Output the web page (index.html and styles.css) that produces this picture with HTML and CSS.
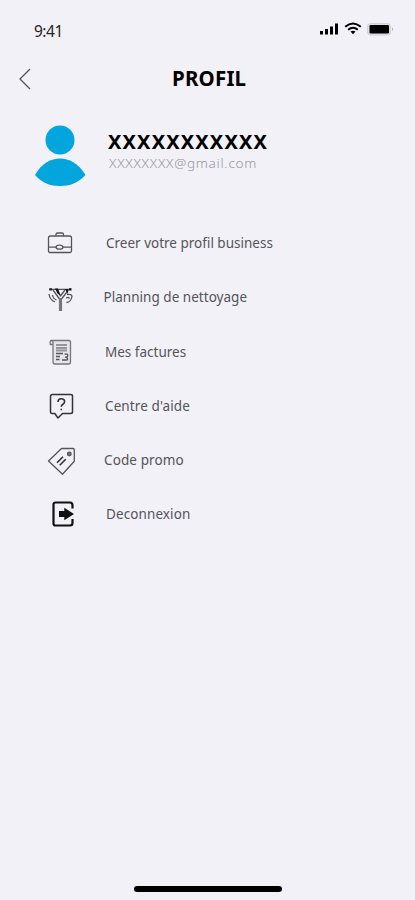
FILE: index.html
```html
<!DOCTYPE html>
<html lang="fr">
<head>
<meta charset="utf-8">
<title>Profil</title>
<link rel="stylesheet" href="styles.css">
</head>
<body>
<div class="screen">
  <header class="status">
    <span class="time">9:41</span>
    <svg class="signals" width="76" height="14" viewBox="0 0 76 14">
      <path d="M1 9h3v3.500H1zM6 7h3v5.500H6zM11 4.500h3v8h-3zM16 1.500h3v11h-3z"/>
      <g fill="none" stroke="#000" stroke-width="2"><path d="M26.200 4.700Q34 -1.800 41.800 4.700"/><path d="M29.200 7.700Q34 3.700 38.800 7.700"/></g>
      <path d="M31.500 9.500Q34 7.800 36.500 9.500L34 12.200z"/>
      <rect x="48.500" y="1.500" width="23" height="11.500" rx="3" fill="#e0dfe3" stroke="#d2d1d6"/>
      <rect x="50.500" y="3" width="19.500" height="8.500" rx="1.200"/>
      <path d="M73 5.500q2 1.700 0 3.500z" fill="#aaa9ad"/>
    </svg>
  </header>
  <nav class="titlebar">
    <svg class="back" width="14" height="24" viewBox="0 0 14 24"><path d="M12 2 2 12l10 10"/></svg>
    <h1>PROFIL</h1>
  </nav>
  <section class="account">
    <svg class="avatar" width="52" height="64" viewBox="0 0 52 64"><circle cx="26" cy="15" r="14.500"/><path d="M1 50C8 38 17 33.500 26 33.500S44 38 51.500 50C44 58 36 61 26 61S8 58 1 50z"/></svg>
    <div class="identity">
      <div class="name">XXXXXXXXXXX</div>
      <div class="mail">XXXXXXXX@gmail.com</div>
    </div>
  </section>
  <ul class="menu">
    <li class="business">
      <svg viewBox="0 0 32 32"><path d="M6.500 9h19q2 0 2 2v13q0 1.500-1.500 1.500H6q-1.500 0-1.500-1.500V11q0-2 2-2zM12 9V7.500Q12 6 13.500 6h4.500q1.500 0 1.500 1.500V9M4.500 20.200H12m7 0h8.500"/><ellipse cx="15.500" cy="20.200" rx="3.400" ry="2"/></svg>
      <span>Creer votre profil business</span>
    </li>
    <li class="planning">
      <svg viewBox="0 0 32 32"><path d="M6 8.300h21M9 9l6.500 9M24.500 9l-7 9M13 9l3.500 6L21 9"/><path d="M5 13q.8 6 6 8M8.500 14q.4 3.500 4 5M23 13.500q4.800-.8 5 2-1 5.500-5.500 6M22 17q3.500-1.500 3 .8"/><path class="trunk" d="M16.500 17v13"/><path class="solid" d="M5.300 7.300h2.500v2.200H5.300zM11 7.500h3l2.500 7-3-2zM25 7.300h2.500v2.200H25zM21 8h3v5z"/></svg>
      <span>Planning de nettoyage</span>
    </li>
    <li class="invoices">
      <svg viewBox="0 0 32 32"><path class="paper" d="M7.500 4.500H25q1.500 0 1.500 1.500v20q0 2-2 2H11q-2 0-2-2V8.500H6.300Q5.500 4.500 7.500 4.500q2 0 1.500 4"/><path class="lines" d="M12 9h11M12 12h11M12 14.500h11"/><path d="M12 17.500h7M12 20.500h4M12 23.500h3.500M18 24h5.500M20.500 18.200h3q1 3-2 3 2.500 0 2 2.800"/></svg>
      <span>Mes factures</span>
    </li>
    <li class="help">
      <svg viewBox="0 0 32 32"><path class="bubble" d="M8.500 4.500h18q2 0 2 1.500V22q0 1.500-2 1.500h-8L14 28l-3.200-4.500H8Q6.500 23.500 6.500 22V6.500Q6.500 4.500 8.500 4.500z"/><path class="bold" d="M14 12q0-3.200 3.300-3.200t3.300 2.700q0 1.700-2 3-1.300.8-1.300 2.200m0 2v1.600"/></svg>
      <span>Centre d'aide</span>
    </li>
    <li class="promo">
      <svg viewBox="0 0 32 32"><path d="M4.500 17 17.500 4.500H29q1.300 0 1.300 1.300v11.500L18.500 30.200z"/><path class="bold" d="m13 18.800 6-6m-3.300 8.500 6-6"/><circle cx="25.300" cy="10" r="1.800" fill="#777"/></svg>
      <span>Code promo</span>
    </li>
    <li class="logout">
      <svg viewBox="0 0 32 32"><path class="door" d="M28.500 10.500V7.500Q28.500 4.500 26 4.500H11.500Q9.500 4.500 9.500 6.500v19q0 2 2 2H26q2.500 0 2.500-2.500V21"/><path class="solid" d="M15 13h5.300V9.800L30 16l-9.700 6.200V19H15z"/></svg>
      <span>Deconnexion</span>
    </li>
  </ul>
  <div class="home"></div>
</div>
</body>
</html>
```
FILE: styles.css
```css
* { box-sizing: border-box; }
body { margin: 0; background: #f2f1f7; color: #000; font-family: "Noto Sans", "Open Sans", sans-serif; }
.screen { height: 900px; display: flex; flex-direction: column; overflow: hidden; }
svg { flex: none; display: block; }
.status { height: 56px; padding: 22px 20px 0 34px; display: flex; justify-content: space-between; align-items: flex-start; }
.time { margin-top: -1px; font-size: 15.5px; line-height: 20px; letter-spacing: -.5px; color: #222; }
.titlebar { height: 46px; padding-left: 18px; display: flex; align-items: center; }
.back { fill: none; stroke: #555; stroke-width: 1.3; }
h1 { margin: -2px 0 0 140px; font-size: 20.5px; line-height: 26px; font-weight: 700; letter-spacing: .2px; }
.account { height: 114px; padding: 23px 0 0 34px; display: flex; align-items: flex-start; }
.avatar { fill: #02a5dc; }
.identity { margin: 4px 0 0 22px; white-space: nowrap; }
.name { font-size: 20px; line-height: 25px; font-weight: 700; letter-spacing: 1.15px; }
.mail { font-size: 13.5px; line-height: 18px; font-weight: 300; letter-spacing: .75px; color: #98979d; margin-left: 1px; }
.menu { list-style: none; margin: -.7px 0 0; padding: 0 0 0 44px; }
.menu li { height: 54.3px; display: flex; align-items: center; white-space: nowrap; }
.menu svg { width: 32px; height: 32px; margin-top: 1px; fill: none; stroke: #55545a; stroke-width: 1.3; stroke-linejoin: round; }
.menu span { margin-left: 30px; font-size: 13.5px; line-height: 20px; margin-top: 1px; font-weight: 400; color: #55545a; }
.menu .planning span { margin-left: 27.5px; letter-spacing: .03px; }
.menu .invoices span, .menu .help span { margin-left: 29px; }
.menu .help span, .menu .promo span, .menu .logout span { letter-spacing: .1px; }
.menu .promo span { margin-left: 28px; }
.menu .solid { fill: #111; stroke: none; }
.menu .trunk { stroke: #77767b; stroke-width: 3.2; }
.menu .lines { stroke: #96959a; stroke-width: 1.8; }
.menu .paper { stroke: #77767b; fill: #e6e5ea; }
.menu .bubble { stroke: #333; stroke-width: 1.5; }
.menu .bold { stroke: #333; stroke-width: 1.6; }
.menu .door { stroke: #111; stroke-width: 2.2; }
.home { width: 148px; height: 6px; border-radius: 3px; background: #000; margin: auto auto 8px 134px; }
```
